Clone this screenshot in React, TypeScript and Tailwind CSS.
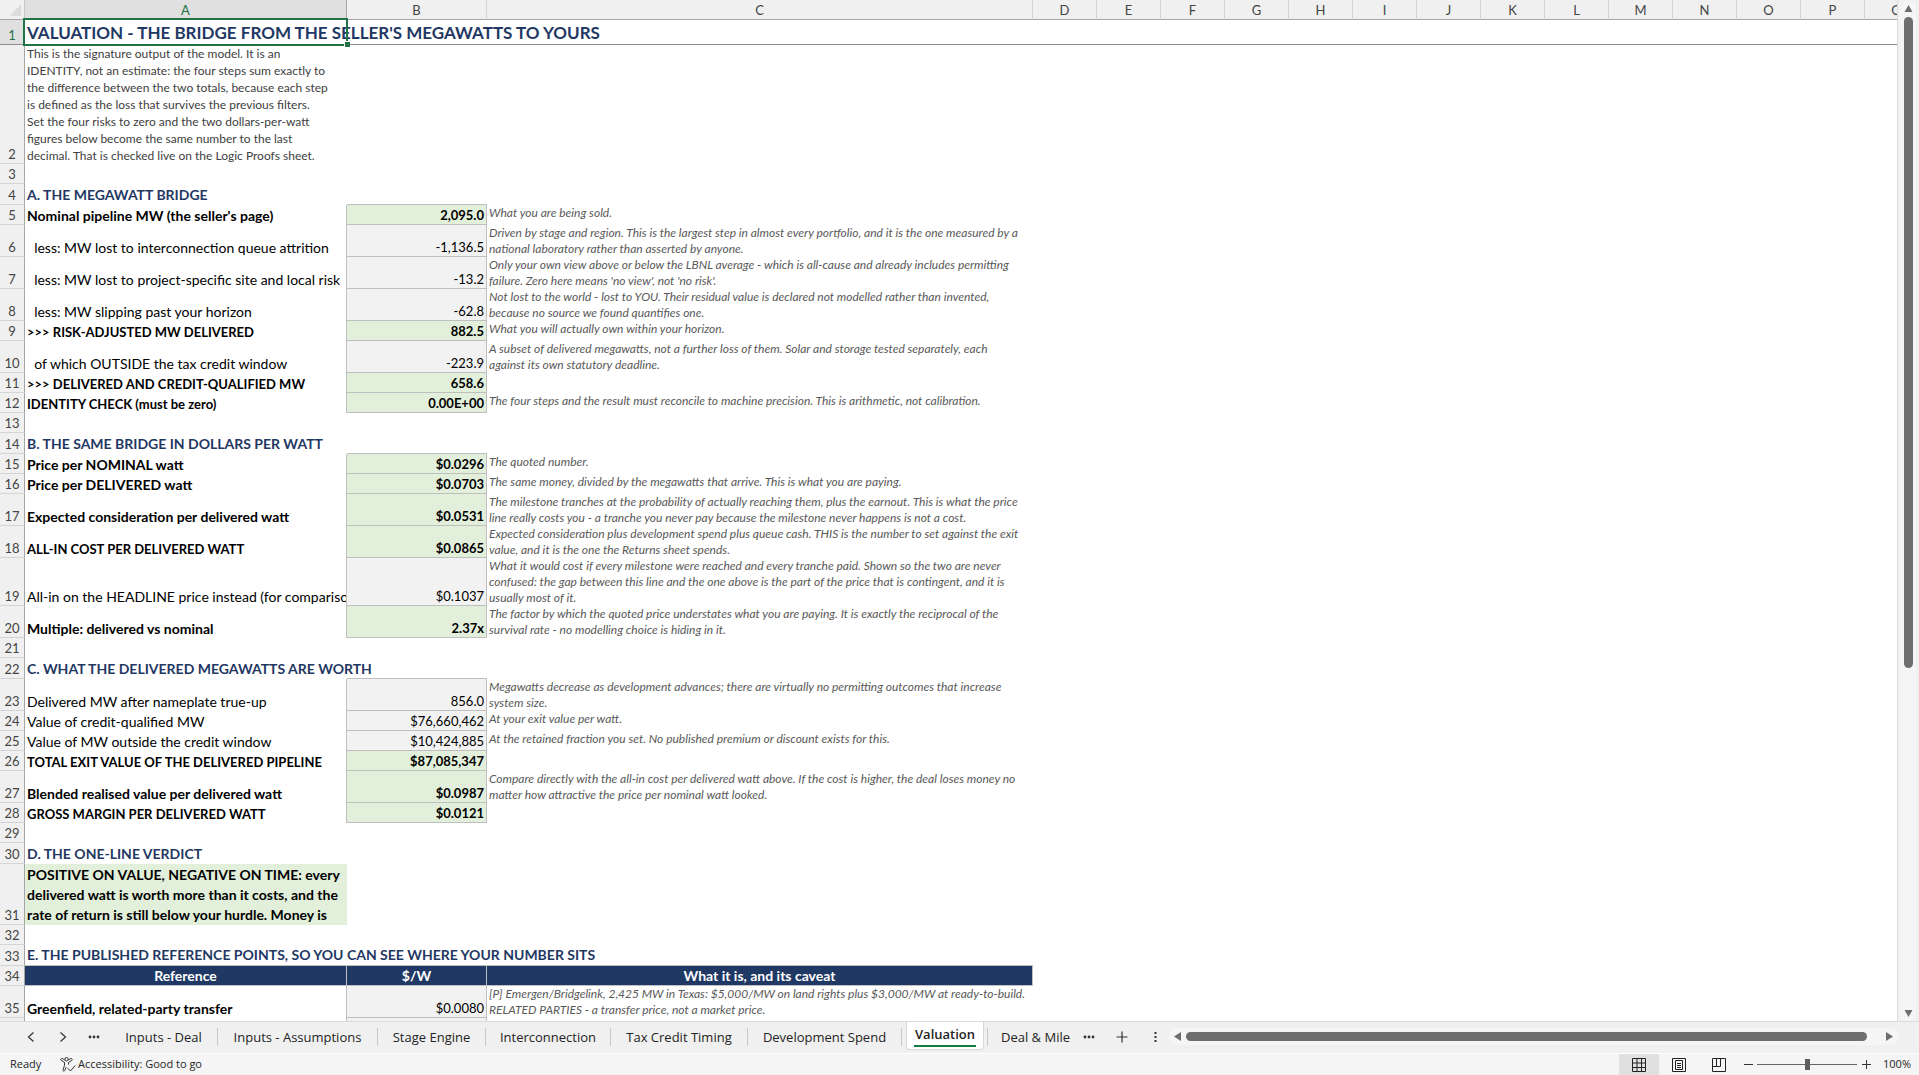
import { clsx } from "clsx";

type Style = "section" | "bold" | "caps" | "plain" | "verdict" | "intro" | "title";

interface Row {
  h: string;
  a?: string;
  style?: Style;
  b?: string;
  out?: boolean;
  note?: string;
  head?: boolean;
}

const H20 = "h-5";
const H21 = "h-[21px]";
const H32 = "h-8";

const ROWS: Row[] = [
  { h: "h-[25px]", a: "VALUATION - THE BRIDGE FROM THE SELLER'S MEGAWATTS TO YOURS", style: "title" },
  {
    h: "h-[119px]",
    style: "intro",
    a: "This is the signature output of the model. It is an\nIDENTITY, not an estimate: the four steps sum exactly to\nthe difference between the two totals, because each step\nis defined as the loss that survives the previous filters.\nSet the four risks to zero and the two dollars-per-watt\nfigures below become the same number to the last\ndecimal. That is checked live on the Logic Proofs sheet.",
  },
  { h: H20 },
  { h: H21, a: "A. THE MEGAWATT BRIDGE", style: "section" },
  { h: H20, a: "Nominal pipeline MW (the seller's page)", style: "bold", b: "2,095.0", out: true, note: "What you are being sold." },
  {
    h: H32, a: "  less: MW lost to interconnection queue attrition", b: "-1,136.5",
    note: "Driven by stage and region. This is the largest step in almost every portfolio, and it is the one measured by a\nnational laboratory rather than asserted by anyone.",
  },
  {
    h: H32, a: "  less: MW lost to project-specific site and local risk", b: "-13.2",
    note: "Only your own view above or below the LBNL average - which is all-cause and already includes permitting\nfailure. Zero here means 'no view', not 'no risk'.",
  },
  {
    h: H32, a: "  less: MW slipping past your horizon", b: "-62.8",
    note: "Not lost to the world - lost to YOU. Their residual value is declared not modelled rather than invented,\nbecause no source we found quantifies one.",
  },
  { h: H20, a: ">>> RISK-ADJUSTED MW DELIVERED", style: "caps", b: "882.5", out: true, note: "What you will actually own within your horizon." },
  {
    h: H32, a: "  of which OUTSIDE the tax credit window", b: "-223.9",
    note: "A subset of delivered megawatts, not a further loss of them. Solar and storage tested separately, each\nagainst its own statutory deadline.",
  },
  { h: H20, a: ">>> DELIVERED AND CREDIT-QUALIFIED MW", style: "caps", b: "658.6", out: true },
  {
    h: H20, a: "IDENTITY CHECK (must be zero)", style: "caps", b: "0.00E+00", out: true,
    note: "The four steps and the result must reconcile to machine precision. This is arithmetic, not calibration.",
  },
  { h: H20 },
  { h: H21, a: "B. THE SAME BRIDGE IN DOLLARS PER WATT", style: "section" },
  { h: H20, a: "Price per NOMINAL watt", style: "bold", b: "$0.0296", out: true, note: "The quoted number." },
  {
    h: H20, a: "Price per DELIVERED watt", style: "bold", b: "$0.0703", out: true,
    note: "The same money, divided by the megawatts that arrive. This is what you are paying.",
  },
  {
    h: H32, a: "Expected consideration per delivered watt", style: "bold", b: "$0.0531", out: true,
    note: "The milestone tranches at the probability of actually reaching them, plus the earnout. This is what the price\nline really costs you - a tranche you never pay because the milestone never happens is not a cost.",
  },
  {
    h: H32, a: "ALL-IN COST PER DELIVERED WATT", style: "caps", b: "$0.0865", out: true,
    note: "Expected consideration plus development spend plus queue cash. THIS is the number to set against the exit\nvalue, and it is the one the Returns sheet spends.",
  },
  {
    h: "h-12", a: "All-in on the HEADLINE price instead (for comparison)", b: "$0.1037",
    note: "What it would cost if every milestone were reached and every tranche paid. Shown so the two are never\nconfused: the gap between this line and the one above is the part of the price that is contingent, and it is\nusually most of it.",
  },
  {
    h: H32, a: "Multiple: delivered vs nominal", style: "bold", b: "2.37x", out: true,
    note: "The factor by which the quoted price understates what you are paying. It is exactly the reciprocal of the\nsurvival rate - no modelling choice is hiding in it.",
  },
  { h: H20 },
  { h: H21, a: "C. WHAT THE DELIVERED MEGAWATTS ARE WORTH", style: "section" },
  {
    h: H32, a: "Delivered MW after nameplate true-up", b: "856.0",
    note: "Megawatts decrease as development advances; there are virtually no permitting outcomes that increase\nsystem size.",
  },
  { h: H20, a: "Value of credit-qualified MW", b: "$76,660,462", note: "At your exit value per watt." },
  {
    h: H20, a: "Value of MW outside the credit window", b: "$10,424,885",
    note: "At the retained fraction you set. No published premium or discount exists for this.",
  },
  { h: H20, a: "TOTAL EXIT VALUE OF THE DELIVERED PIPELINE", style: "caps", b: "$87,085,347", out: true },
  {
    h: H32, a: "Blended realised value per delivered watt", style: "bold", b: "$0.0987", out: true,
    note: "Compare directly with the all-in cost per delivered watt above. If the cost is higher, the deal loses money no\nmatter how attractive the price per nominal watt looked.",
  },
  { h: H20, a: "GROSS MARGIN PER DELIVERED WATT", style: "caps", b: "$0.0121", out: true },
  { h: H20 },
  { h: H21, a: "D. THE ONE-LINE VERDICT", style: "section" },
  {
    h: "h-[61px]", style: "verdict",
    a: "POSITIVE ON VALUE, NEGATIVE ON TIME: every\ndelivered watt is worth more than it costs, and the\nrate of return is still below your hurdle. Money is",
  },
  { h: H20 },
  { h: H21, a: "E. THE PUBLISHED REFERENCE POINTS, SO YOU CAN SEE WHERE YOUR NUMBER SITS", style: "section" },
  { h: H20, head: true, a: "Reference", b: "$/W", note: "What it is, and its caveat" },
  {
    h: H32, a: "Greenfield, related-party transfer", style: "bold", b: "$0.0080",
    note: "[P] Emergen/Bridgelink, 2,425 MW in Texas: $5,000/MW on land rights plus $3,000/MW at ready-to-build.\nRELATED PARTIES - a transfer price, not a market price.",
  },
];

const STYLES: Record<Style, string> = {
  title: "whitespace-pre text-[17px] leading-[22px] font-bold text-[#1f3864]",
  intro: "whitespace-pre text-[12px] leading-[17px] text-[#404040]",
  section: "whitespace-pre text-[14px] leading-5 font-bold text-[#1f3864]",
  bold: "whitespace-pre overflow-hidden text-[14px] leading-[19px] font-bold text-black",
  caps: "whitespace-pre overflow-hidden text-[13px] leading-[17px] font-bold text-black",
  plain: "whitespace-pre overflow-hidden text-[14px] leading-[19px] text-black",
  verdict: "whitespace-pre overflow-hidden bg-[#e2efda] text-[14px] leading-5 font-bold text-black",
};

const EXTRA_COLS = ["D", "E", "F", "G", "H", "I", "J", "K", "L", "M", "N", "O", "P", "Q"];

const TABS = [
  { name: "Inputs - Deal", w: "w-[108px]" },
  { name: "Inputs - Assumptions", w: "w-40" },
  { name: "Stage Engine", w: "w-[108px]" },
  { name: "Interconnection", w: "w-[125px]" },
  { name: "Tax Credit Timing", w: "w-[137px]" },
  { name: "Development Spend", w: "w-[154px]" },
];

function ColumnHead({ name }: { name: string }) {
  const active = name === "A";
  return (
    <th
      scope="col"
      className={clsx(
        "h-5 border-r border-b border-b-[#a6a6a6] p-0 text-center align-bottom text-[13px] leading-[17px] font-normal",
        active ? "border-r-[#a6a6a6] bg-[#e0e0e0] text-[#217346]" : "border-r-[#d4d4d4] bg-[#f0f0f0] text-[#444]",
      )}
    >
      {name}
    </th>
  );
}

function TableHead({ text }: { text?: string }) {
  return (
    <th scope="col" className="border-r border-b border-[#bfbfbf] bg-[#1f3864] p-0 text-center text-[14px] leading-[19px] font-bold text-white">
      {text}
    </th>
  );
}

function SheetRow({ row, index }: { row: Row; index: number }) {
  const first = index === 0;
  const nextHasValue = Boolean(ROWS[index + 1]?.b);
  return (
    <tr className={row.h}>
      <th
        scope="row"
        className={clsx(
          "border-r border-b border-r-[#a6a6a6] p-0 text-center align-bottom text-[13px] leading-[17px] font-normal",
          first ? "border-b-[#8c8c8c] bg-[#e0e0e0] text-[#217346]" : "border-b-[#d4d4d4] bg-[#f0f0f0] text-[#444]",
        )}
      >
        {index + 1}
      </th>
      {row.head ? (
        <>
          <TableHead text={row.a} />
          <TableHead text={row.b} />
          <TableHead text={row.note} />
        </>
      ) : (
        <>
          <td
            className={clsx(
              "relative p-0 pl-0.5 align-bottom",
              row.b && "border-r border-[#bfbfbf]",
              first && "border-b border-[#8c8c8c]",
              ROWS[index + 1]?.head && "border-b border-[#bfbfbf]",
              STYLES[row.style ?? "plain"],
            )}
          >
            {row.a}
            {first && (
              <>
                <span className="pointer-events-none absolute -top-0.5 -right-px -bottom-0.5 -left-0.5 border-2 border-[#217346]" />
                <span className="absolute -right-[3px] -bottom-[3px] size-1.5 border-t border-l border-white bg-[#217346]" />
              </>
            )}
          </td>
          <td
            className={clsx(
              "p-0 pr-0.5 text-right align-bottom text-[13px] leading-[17px] text-black",
              row.b && "border-r border-b border-[#bfbfbf]",
              !row.b && nextHasValue && "border-b border-[#bfbfbf]",
              row.b && (row.out ? "bg-[#e2efda] font-bold" : "bg-[#f2f2f2]"),
              first && "border-b border-[#8c8c8c]",
            )}
          >
            {row.b}
          </td>
          <td
            className={clsx(
              "p-0 pl-0.5 align-top text-[12px] leading-4 whitespace-pre text-[#595959] italic",
              first && "border-b border-[#8c8c8c]",
              ROWS[index + 1]?.head && "border-b border-[#bfbfbf]",
            )}
          >
            {row.note}
          </td>
        </>
      )}
      <td colSpan={EXTRA_COLS.length} className={clsx("p-0", first && "border-b border-[#8c8c8c]")} />
    </tr>
  );
}

function Sheet() {
  return (
    <table className="w-[1929px] table-fixed border-separate border-spacing-0 font-['Lato',sans-serif]">
      <colgroup>
        <col className="w-[25px]" />
        <col className="w-[322px]" />
        <col className="w-[140px]" />
        <col className="w-[546px]" />
        {EXTRA_COLS.map((c) => (
          <col key={c} className="w-16" />
        ))}
      </colgroup>
      <thead>
        <tr>
          <td className="h-5 border-r border-b border-r-[#c8c8c8] border-b-[#a6a6a6] bg-[#f0f0f0] p-0">
            <svg className="ml-auto h-3 w-3.5" viewBox="0 0 14 12" aria-hidden="true">
              <path d="M11 0v12H0z" fill="#dcdcdc" />
            </svg>
          </td>
          {["A", "B", "C", ...EXTRA_COLS].map((c) => (
            <ColumnHead key={c} name={c} />
          ))}
        </tr>
      </thead>
      <tbody>
        {ROWS.map((row, i) => (
          <SheetRow key={i} row={row} index={i} />
        ))}
        <tr className="h-5">
          <td className="border-r border-[#a6a6a6] bg-[#f0f0f0] p-0" />
          <td className="border-r border-[#bfbfbf] p-0" />
          <td className="border-r border-[#bfbfbf] bg-[#f2f2f2] p-0" />
          <td colSpan={EXTRA_COLS.length + 1} className="p-0" />
        </tr>
      </tbody>
    </table>
  );
}

function VerticalScroll() {
  return (
    <div className="flex w-[21px] shrink-0 flex-col bg-[#f0f0f0] pl-0.5">
      <div className="flex w-4 flex-1 flex-col items-center rounded-full bg-[#f5f5f5]">
        <button type="button" aria-label="Scroll up" className="flex h-4 items-center">
          <svg width="9" height="9" viewBox="0 0 9 9"><path d="M4.500 1 8.500 8h-8z" fill="#6e6e6e" /></svg>
        </button>
        <div className="mt-px h-[651px] w-[9px] rounded-full bg-[#6e6e6e]" />
        <button type="button" aria-label="Scroll down" className="mt-auto flex h-4 items-center">
          <svg width="9" height="9" viewBox="0 0 9 9"><path d="M.5 1h8L4.500 8z" fill="#6e6e6e" /></svg>
        </button>
      </div>
    </div>
  );
}

function TabBar() {
  return (
    <nav aria-label="Sheets" className="flex h-8 shrink-0 items-center border-t border-[#dcdcdc] bg-[#f0f0f0] pr-5 pb-0.5 text-[13px] text-[#242424]">
      <div className="flex w-[110px] shrink-0 items-center pl-[15px]">
        <button type="button" aria-label="Previous sheet" className="flex w-8 justify-center">
          <svg width="8" height="12" viewBox="0 0 8 12" fill="none" stroke="#333" strokeWidth="1.200"><path d="M6.500 1.500 1.500 6l5 4.500" /></svg>
        </button>
        <button type="button" aria-label="Next sheet" className="flex w-8 justify-center">
          <svg width="8" height="12" viewBox="0 0 8 12" fill="none" stroke="#333" strokeWidth="1.200"><path d="m1.500 1.500 5 4.500-5 4.500" /></svg>
        </button>
        <button type="button" aria-label="More sheets" className="flex w-[30px] justify-center">
          <Dots />
        </button>
      </div>
      {TABS.map((t) => (
        <button key={t.name} type="button" className={clsx("h-[18px] shrink-0 border-r border-[#c8c8c8] text-center leading-[18px] whitespace-nowrap", t.w)}>
          {t.name}
        </button>
      ))}
      <button type="button" className="ml-1 flex h-7 w-[78px] shrink-0 justify-center self-start rounded-b-[4px] border border-t-0 border-[#d8d8d8] bg-white font-semibold">
        <span className="mt-0.5 h-[23px] border-b-2 border-[#107c41] px-px leading-5">Valuation</span>
      </button>
      <button type="button" className="ml-[3px] h-[18px] w-[88px] shrink-0 border-l border-[#c8c8c8] pl-[13px] text-left leading-[18px] whitespace-nowrap">
        Deal &amp; Mile
      </button>
      <button type="button" aria-label="All sheets" className="flex w-7 shrink-0 justify-center"><Dots /></button>
      <button type="button" aria-label="New sheet" className="flex w-[38px] shrink-0 justify-center">
        <svg width="12" height="12" viewBox="0 0 12 12" stroke="#333" strokeWidth="1.200"><path d="M6 .5v11M.5 6h11" /></svg>
      </button>
      <div className="flex w-7 shrink-0 justify-center">
        <svg width="3" height="12" viewBox="0 0 3 12" fill="#333"><path d="M.5 1h2v2h-2zM.5 5h2v2h-2zM.5 9h2v2h-2z" /></svg>
      </div>
      <div className="flex h-[17px] min-w-0 flex-1 items-center rounded-full bg-[#f5f5f5]">
        <button type="button" aria-label="Scroll left" className="flex w-[17px] shrink-0 justify-center">
          <svg width="7" height="9" viewBox="0 0 7 9"><path d="M7 0v9L0 4.500z" fill="#6e6e6e" /></svg>
        </button>
        <div className="h-[9px] flex-1 rounded-full bg-[#6e6e6e]" />
        <button type="button" aria-label="Scroll right" className="flex w-8 shrink-0 justify-end pr-[6px]">
          <svg width="7" height="9" viewBox="0 0 7 9"><path d="M0 0v9l7-4.500z" fill="#6e6e6e" /></svg>
        </button>
      </div>
    </nav>
  );
}

function Dots() {
  return (
    <svg width="12" height="4" viewBox="0 0 12 4" fill="#333" aria-hidden="true">
      <circle cx="2" cy="2" r="1.400" />
      <circle cx="6" cy="2" r="1.400" />
      <circle cx="10" cy="2" r="1.400" />
    </svg>
  );
}

function StatusBar() {
  return (
    <footer className="flex h-[22px] shrink-0 items-center border-t border-white bg-[#f5f5f5] pr-2 pl-2.5 text-[11px] text-[#242424]">
      <span className="w-[50px]">Ready</span>
      <button type="button" className="flex items-center gap-0.5 whitespace-nowrap">
        <svg width="16" height="15" viewBox="0 0 16 15" fill="none" stroke="#333" strokeWidth="1">
          <circle cx="6.500" cy="2.200" r="1.700" />
          <path d="M4.900 3 2.400 1.600a1.100 1.100 0 0 0-1.100 1.900L4.500 5.400v3L3 12.800a.9.9 0 0 0 1.700.7l1.500-3.300M8.100 3l2.500-1.400a1.100 1.100 0 0 1 1.100 1.900L8.500 5.400v2.200M7.500 11l3 3 4.700-5.500" />
        </svg>
        Accessibility: Good to go
      </button>
      <div className="ml-auto flex h-full items-center">
        <button type="button" aria-label="Normal view" aria-pressed="true" className="flex h-full w-10 items-center justify-center bg-[#e0e0e0]">
          <svg width="14" height="14" viewBox="0 0 14 14" fill="none" stroke="#222"><path d="M.5.5h13v13H.5zM.5 5h13M.5 9.500h13M5 .5v13M9.500.5v13" /></svg>
        </button>
        <button type="button" aria-label="Page layout" className="flex h-full w-10 items-center justify-center">
          <svg width="14" height="14" viewBox="0 0 14 14" fill="none" stroke="#222"><path d="M.5.5h13v13H.5zM3.500 2.500h7v9h-7zM5 5.500h4M5 7.500h4M5 9.500h4" /></svg>
        </button>
        <button type="button" aria-label="Page break preview" className="flex h-full w-10 items-center justify-center">
          <svg width="14" height="14" viewBox="0 0 14 14" fill="none" stroke="#222"><path d="M.5.5h13v13H.5zM.5 8.500h8v-8M4.500.5v8" /></svg>
        </button>
        <button type="button" aria-label="Zoom out" className="flex w-[18px] justify-center">
          <svg width="9" height="9" viewBox="0 0 9 9" stroke="#333"><path d="M0 4.500h9" /></svg>
        </button>
        <input
          type="range"
          min={0}
          max={100}
          defaultValue={50}
          aria-label="Zoom"
          className="h-3 w-[100px] appearance-none bg-[linear-gradient(#666,#666)] bg-[length:100%_1px] bg-center bg-no-repeat [&::-webkit-slider-thumb]:h-[11px] [&::-webkit-slider-thumb]:w-[5px] [&::-webkit-slider-thumb]:appearance-none [&::-webkit-slider-thumb]:bg-[#5e5e5e]"
        />
        <button type="button" aria-label="Zoom in" className="flex w-[18px] justify-center">
          <svg width="9" height="9" viewBox="0 0 9 9" stroke="#333"><path d="M0 4.500h9M4.500 0v9" /></svg>
        </button>
        <span className="w-9 text-right">100%</span>
      </div>
    </footer>
  );
}

export default function App() {
  return (
    <div className="flex h-screen flex-col overflow-hidden bg-white font-['Open_Sans',sans-serif]">
      <main className="flex min-h-0 flex-1">
        <div className="min-w-0 flex-1 overflow-hidden border-r border-[#dcdcdc]">
          <Sheet />
        </div>
        <VerticalScroll />
      </main>
      <TabBar />
      <StatusBar />
    </div>
  );
}
